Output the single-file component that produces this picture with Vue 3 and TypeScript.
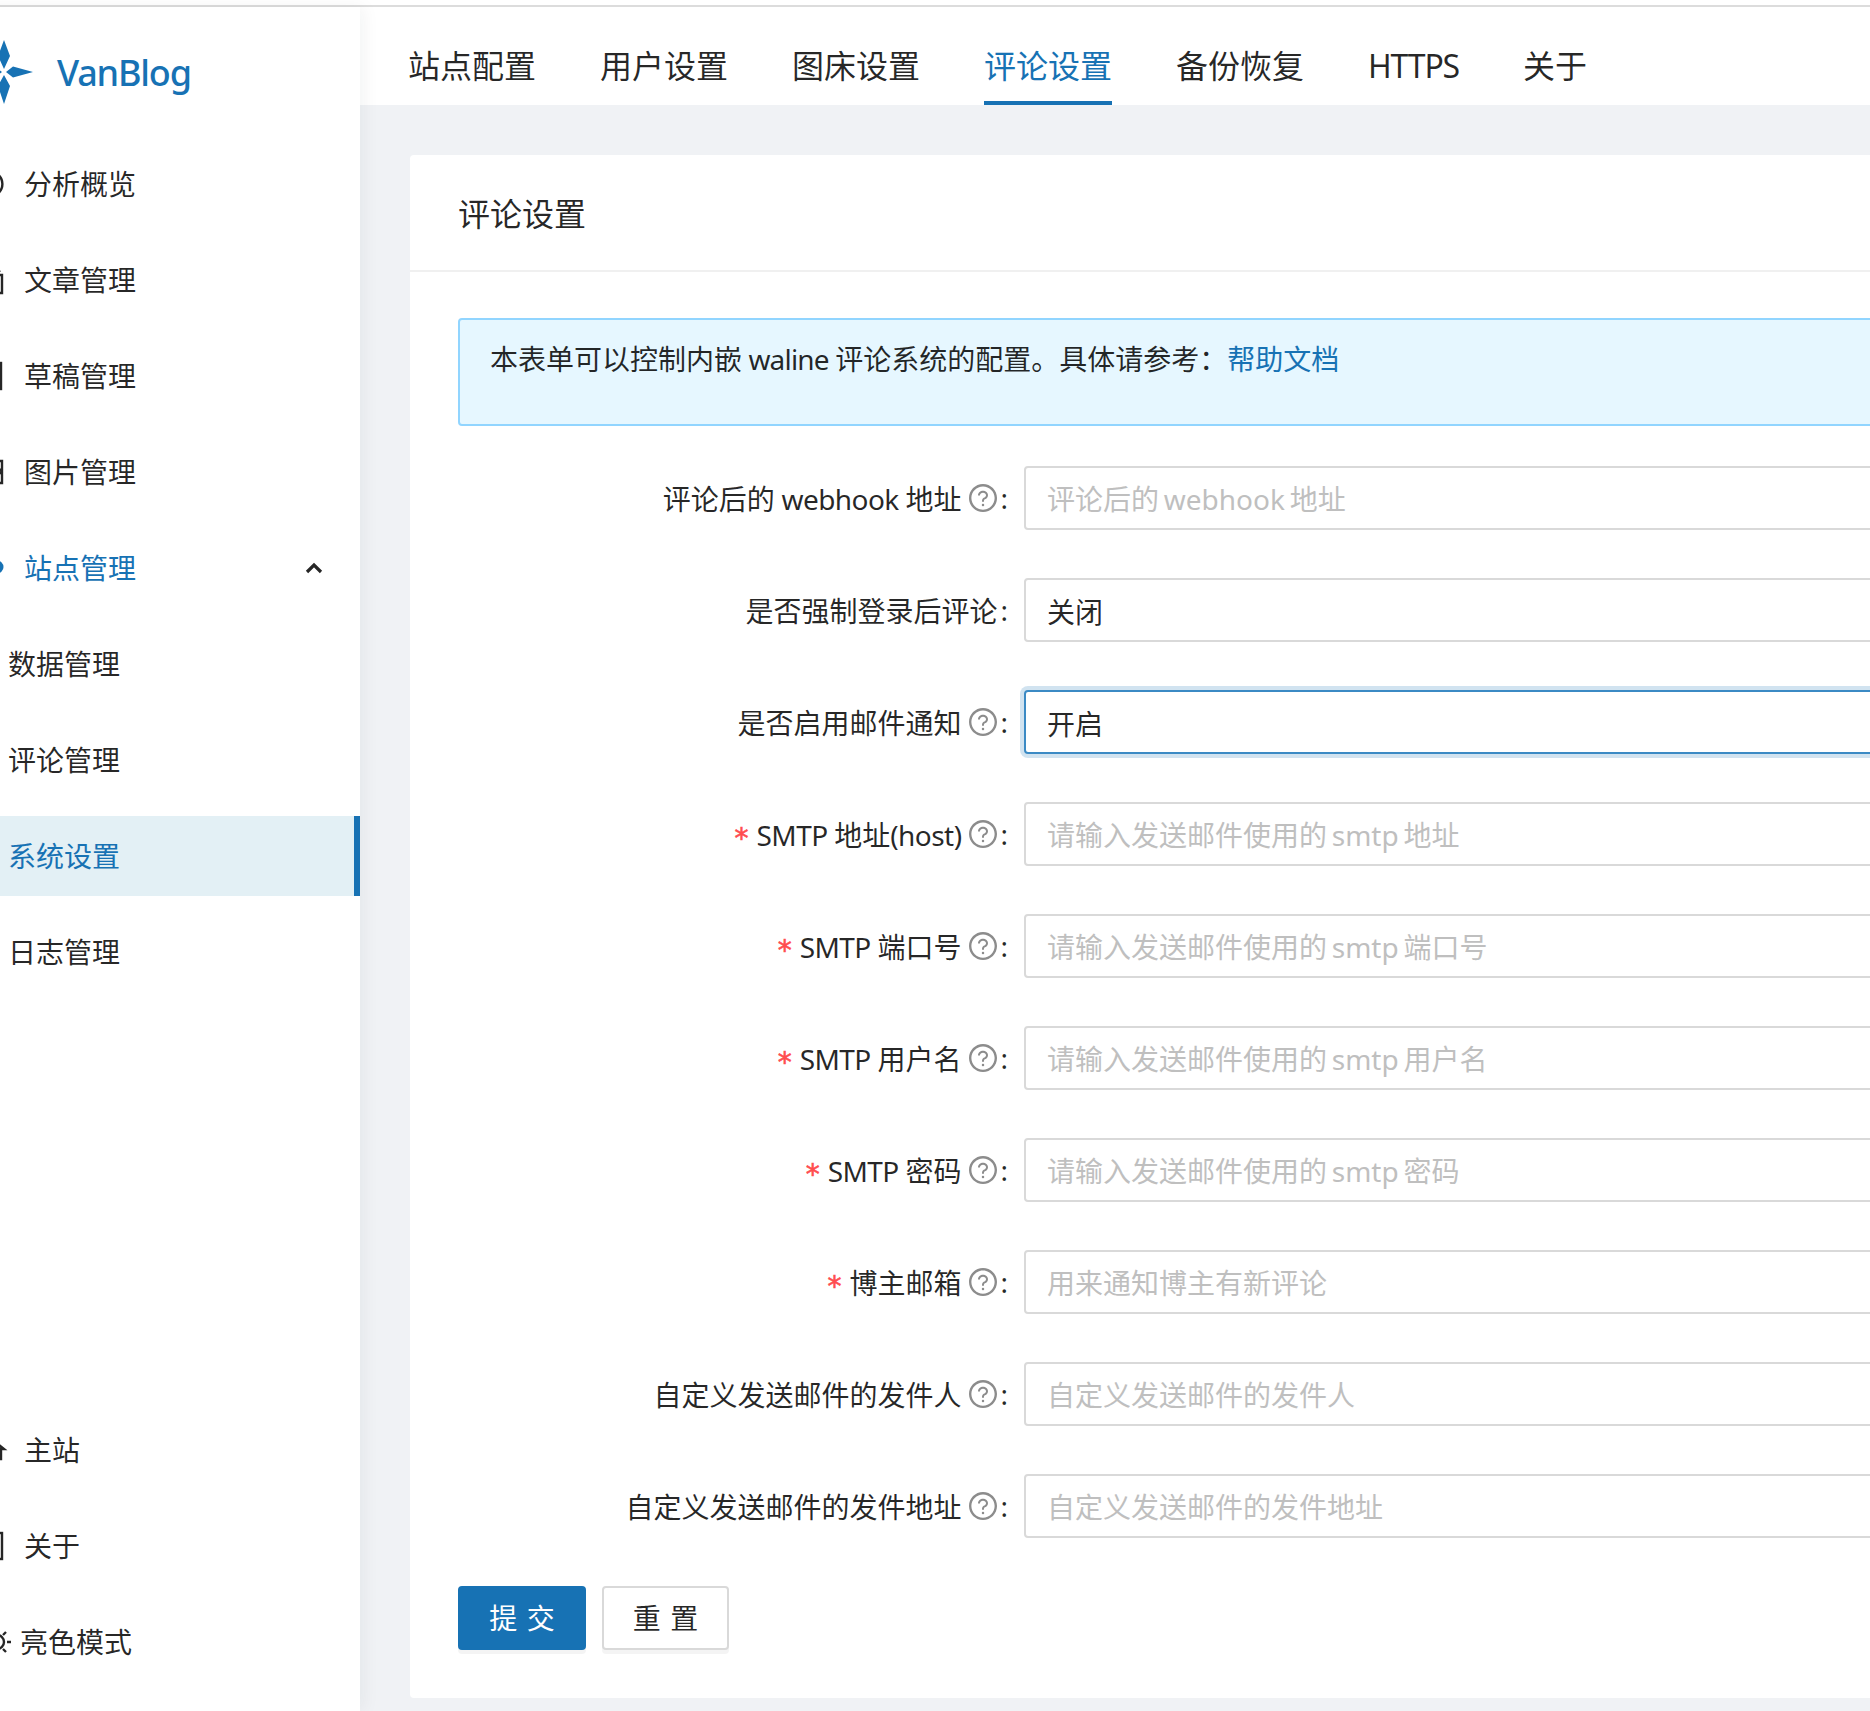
<script setup lang="ts">
type MenuItem = {
  title: string
  icon?: string
  active?: boolean
  open?: boolean
  sub?: boolean
}

type FormRow = {
  label: string
  help: boolean
  required?: boolean
  placeholder?: string
  value?: string
  focused?: boolean
}

const topMenu: MenuItem[] = [
  { title: '分析概览', icon: 'dashboard' },
  { title: '文章管理', icon: 'article' },
  { title: '草稿管理', icon: 'draft' },
  { title: '图片管理', icon: 'picture' },
  { title: '站点管理', icon: 'tool', active: true, open: true },
  { title: '数据管理', sub: true },
  { title: '评论管理', sub: true },
  { title: '系统设置', sub: true, active: true },
  { title: '日志管理', sub: true },
]

const bottomMenu: MenuItem[] = [
  { title: '主站', icon: 'home' },
  { title: '关于', icon: 'about' },
  { title: '亮色模式', icon: 'sun' },
]

const tabs = ['站点配置', '用户设置', '图床设置', '评论设置', '备份恢复', 'HTTPS', '关于']

const rows: FormRow[] = [
  { label: '评论后的 webhook 地址', help: true, placeholder: '评论后的 webhook 地址' },
  { label: '是否强制登录后评论', help: false, value: '关闭' },
  { label: '是否启用邮件通知', help: true, value: '开启', focused: true },
  { label: 'SMTP 地址(host)', help: true, required: true, placeholder: '请输入发送邮件使用的 smtp 地址' },
  { label: 'SMTP 端口号', help: true, required: true, placeholder: '请输入发送邮件使用的 smtp 端口号' },
  { label: 'SMTP 用户名', help: true, required: true, placeholder: '请输入发送邮件使用的 smtp 用户名' },
  { label: 'SMTP 密码', help: true, required: true, placeholder: '请输入发送邮件使用的 smtp 密码' },
  { label: '博主邮箱', help: true, required: true, placeholder: '用来通知博主有新评论' },
  { label: '自定义发送邮件的发件人', help: true, placeholder: '自定义发送邮件的发件人' },
  { label: '自定义发送邮件的发件地址', help: true, placeholder: '自定义发送邮件的发件地址' },
]

// split a label into latin and cjk runs, latin gets tighter tracking
function runs(text: string) {
  return text.split(/([\x20-\x7e]+)/).filter(Boolean)
}

function isLatin(run: string) {
  return /^[\x20-\x7e]/.test(run)
}
</script>

<template>
  <div class="app">
    <div class="top-line"></div>
    <div class="layout">
      <aside class="sidebar">
        <div class="logo">
          <svg class="logo__mark" width="66" height="66" viewBox="0 0 66 66">
            <path d="M33 1l6 16-6 13-6-13zM33 65l6-18-6-11-6 11zM62 33l-20-5.500-7 5.500 7 5.500zM4 33l20-5.500 7 5.500-7 5.500z" fill="#1772b4" />
          </svg>
          <span class="logo__title">VanBlog</span>
        </div>

        <nav class="menu">
          <a
            v-for="item in topMenu"
            :key="item.title"
            class="menu__item"
            :class="{
              'menu__item--sub': item.sub,
              'menu__item--active': item.active,
              'menu__item--selected': item.active && item.sub,
            }"
          >
            <svg v-if="item.icon" class="menu__icon" viewBox="0 0 28 28" fill="none" stroke="currentColor" stroke-width="2.4">
              <circle v-if="item.icon === 'dashboard'" cx="14" cy="14" r="12.400" />
              <path v-if="item.icon === 'article'" d="M2 9h24v18H2M19 1l5 5" />
              <rect v-if="item.icon === 'draft'" x="2" y="1" width="23" height="26" />
              <path v-if="item.icon === 'picture'" d="M2 3h24v22H2zM20 9l6 4M20 19l6-6" />
              <circle v-if="item.icon === 'tool'" cx="21" cy="13" r="6.500" fill="currentColor" stroke="none" />
            </svg>
            <span>{{ item.title }}</span>
            <svg v-if="item.open" class="menu__arrow" width="20" height="12" viewBox="0 0 20 12" fill="none">
              <path d="M3 10l7-7 7 7" stroke="#262626" stroke-width="3.2" />
            </svg>
          </a>
        </nav>

        <nav class="menu menu--bottom">
          <a
            v-for="item in bottomMenu"
            :key="item.title"
            class="menu__item"
            :class="{ 'menu__item--tight': item.icon === 'sun' }"
          >
            <svg class="menu__icon" viewBox="0 0 28 28" fill="none" stroke="currentColor" stroke-width="2.4">
              <path v-if="item.icon === 'home'" d="M14 2l14 11h-3v10H3V13H0z" />
              <rect v-if="item.icon === 'about'" x="2" y="1" width="24" height="26" />
              <template v-if="item.icon === 'sun'">
                <circle cx="14" cy="14" r="7" />
                <path d="M24 14h4M20 7l3-3M20 21l3 3M0 14h4M8 7L5 4M8 21l-3 3M14 0v4M14 24v4" />
              </template>
            </svg>
            <span>{{ item.title }}</span>
          </a>
        </nav>
      </aside>

      <main class="main">
        <header class="tabs">
          <div
            v-for="tab in tabs"
            :key="tab"
            class="tab"
            :class="{ 'tab--active': tab === '评论设置', 'tab--latin': tab === 'HTTPS' }"
          >
            {{ tab }}
          </div>
        </header>

        <section class="card">
          <h2 class="card__title">评论设置</h2>
          <div class="card__body">
            <div class="alert">
              本表单可以控制内嵌<span class="latin"> waline </span>评论系统的配置。具体请参考：<a class="alert__link">帮助文档</a>
            </div>

            <form class="form" @submit.prevent>
              <div v-for="row in rows" :key="row.label" class="form-row">
                <label class="form-row__label">
                  <span v-if="row.required" class="form-row__star">*</span>
                  <span class="form-row__text"><span
                    v-for="run in runs(row.label)"
                    :key="run"
                    :class="{ 'form-row__latin': isLatin(run) }"
                  >{{ run }}</span></span>
                  <svg v-if="row.help" class="form-row__help" viewBox="64 64 896 896" fill="#8c8c8c">
                    <path d="M512 64C264.600 64 64 264.600 64 512s200.600 448 448 448 448-200.600 448-448S759.400 64 512 64zm0 820c-205.400 0-372-166.600-372-372s166.600-372 372-372 372 166.600 372 372-166.600 372-372 372z" />
                    <path d="M623.600 316.700C593.600 290.400 554 276 512 276s-81.600 14.500-111.600 40.700C369.200 344 352 380.700 352 420v7.600c0 4.400 3.600 8 8 8h48c4.400 0 8-3.600 8-8V420c0-44.100 43.100-80 96-80s96 35.900 96 80c0 31.100-22 59.600-56.100 72.700-21.200 8.100-39.200 22.300-52.100 40.900-13.100 19-19.900 41.800-19.900 64.900V620c0 4.400 3.600 8 8 8h48c4.400 0 8-3.600 8-8v-22.700a48.300 48.300 0 0 1 30.900-44.800c59-22.700 97.100-74.700 97.100-132.500.1-39.300-17.100-76-48.300-103.300zM472 732a40 40 0 1 0 80 0 40 40 0 1 0-80 0z" />
                  </svg>
                  <span class="form-row__colon">:</span>
                </label>
                <input
                  class="form-row__input"
                  :class="{ 'form-row__input--focused': row.focused }"
                  type="text"
                  :placeholder="row.placeholder"
                  :value="row.value"
                />
              </div>

              <div class="actions">
                <button class="btn btn--primary" type="submit"><span>提交</span></button>
                <button class="btn" type="reset"><span>重置</span></button>
              </div>
            </form>
          </div>
        </section>
      </main>
    </div>
  </div>
</template>

<style>
html,
body {
  margin: 0;
  overflow: hidden;
  background: #fff;
}
</style>

<style scoped>
.app {
  width: 1870px;
  height: 1711px;
  overflow: hidden;
  font-family: 'Noto Sans', 'Noto Sans CJK SC', sans-serif;
  font-size: 28px;
  line-height: 44px;
  color: rgba(0, 0, 0, 0.85);
  background: #fff;
}

.latin {
  letter-spacing: -0.03em;
}

.top-line {
  height: 2px;
  margin-top: 5px;
  background: #dcdcdc;
}

/* the capture starts 56px into the sidebar */
.layout {
  display: flex;
  height: 1704px;
  margin-left: -56px;
}

.sidebar {
  position: relative;
  z-index: 1;
  flex: none;
  display: flex;
  flex-direction: column;
  width: 416px;
  background: #fff;
  box-shadow: 4px 0 16px rgba(29, 35, 41, 0.05);
}

.logo {
  display: flex;
  align-items: center;
  height: 129px;
  padding-left: 27px;
}

.logo__mark {
  flex: none;
}

.logo__title {
  margin-left: 20px;
  margin-top: 2px;
  font-size: 36px;
  font-weight: 500;
  letter-spacing: -1.2px;
  color: #1772b4;
}

.menu {
  display: flex;
  flex-direction: column;
}

.menu__item {
  display: flex;
  align-items: center;
  height: 80px;
  margin: 8px 0;
  padding-left: 32px;
  box-sizing: border-box;
}

.menu--bottom {
  margin-top: auto;
  padding-bottom: 21px;
}

.menu__item--sub {
  padding-left: 64px;
}

.menu__item--active {
  color: #1772b4;
}

.menu__item--selected {
  background: #e3f0f5;
  border-right: 6px solid #1772b4;
}

.menu__item--tight {
  padding-left: 39px;
}

.menu__item--tight .menu__icon {
  margin-right: 9px;
}

.menu__icon {
  flex: none;
  width: 28px;
  height: 28px;
  margin-right: 20px;
  overflow: visible;
}

.menu__arrow {
  margin-left: auto;
  margin-right: 36px;
}

.main {
  flex: none;
  width: 2200px;
  background: #f0f2f5;
}

.tabs {
  display: flex;
  gap: 64px;
  height: 98px;
  padding-left: 48px;
  background: #fff;
  box-sizing: border-box;
  font-size: 32px;
}

.tab {
  height: 98px;
  padding-top: 36px;
  line-height: 46px;
  box-sizing: border-box;
}

.tab--active {
  color: #1772b4;
  border-bottom: 4px solid #1772b4;
}

.tab--latin {
  letter-spacing: -1.2px;
}

.card {
  margin: 50px 0 0 50px;
  background: #fff;
  border-radius: 4px;
}

.card__title {
  margin: 0;
  height: 117px;
  padding: 36px 48px 0;
  box-sizing: border-box;
  border-bottom: 2px solid #f0f0f0;
  font-size: 32px;
  font-weight: 400;
  line-height: 46px;
}

.card__body {
  padding: 46px 48px 48px;
}

.alert {
  height: 108px;
  margin-bottom: 40px;
  padding: 17px 30px 15px;
  box-sizing: border-box;
  background: #e6f7ff;
  border: 2px solid #91d5ff;
  border-radius: 4px;
}

.alert__link {
  color: #1772b4;
}

.form-row {
  display: flex;
  margin-bottom: 48px;
}

.form-row__label {
  flex: none;
  display: flex;
  align-items: center;
  justify-content: flex-end;
  width: 566px;
  height: 64px;
}

.form-row__star {
  margin-right: 8px;
  font-family: 'DejaVu Sans', sans-serif;
  font-size: 28px;
  color: #ff4d4f;
  -webkit-text-stroke: 0.6px #ff4d4f;
  transform: translateY(5px);
}

.form-row__text {
  padding-top: 1px;
}

.form-row__latin {
  letter-spacing: -0.02em;
}

.form-row__help {
  width: 28px;
  height: 28px;
  margin-left: 8px;
}

.form-row__colon {
  margin: 0 16px 0 3px;
}

.form-row__input {
  flex: 1;
  height: 64px;
  padding: 2px 21px 0;
  box-sizing: border-box;
  background: #fff;
  border: 2px solid #d9d9d9;
  border-radius: 4px;
  outline: none;
  font: inherit;
  color: inherit;
  word-spacing: -2.5px;
}

.form-row__input::placeholder {
  color: #bfbfbf;
}

.form-row__input--focused {
  border-color: #3b8ac4;
  box-shadow: 0 0 0 4px rgba(23, 114, 180, 0.2);
}

.actions {
  display: flex;
  gap: 16px;
}

.btn {
  width: 127px;
  height: 64px;
  padding: 0;
  background: #fff;
  border: 2px solid #d9d9d9;
  border-radius: 4px;
  box-shadow: 0 4px 0 rgba(0, 0, 0, 0.043);
  font: inherit;
  color: inherit;
}

.btn span {
  letter-spacing: 0.34em;
  margin-right: -0.34em;
}

.btn--primary {
  width: 128px;
  background: #1772b4;
  border-color: #1772b4;
  color: #fff;
}
</style>
